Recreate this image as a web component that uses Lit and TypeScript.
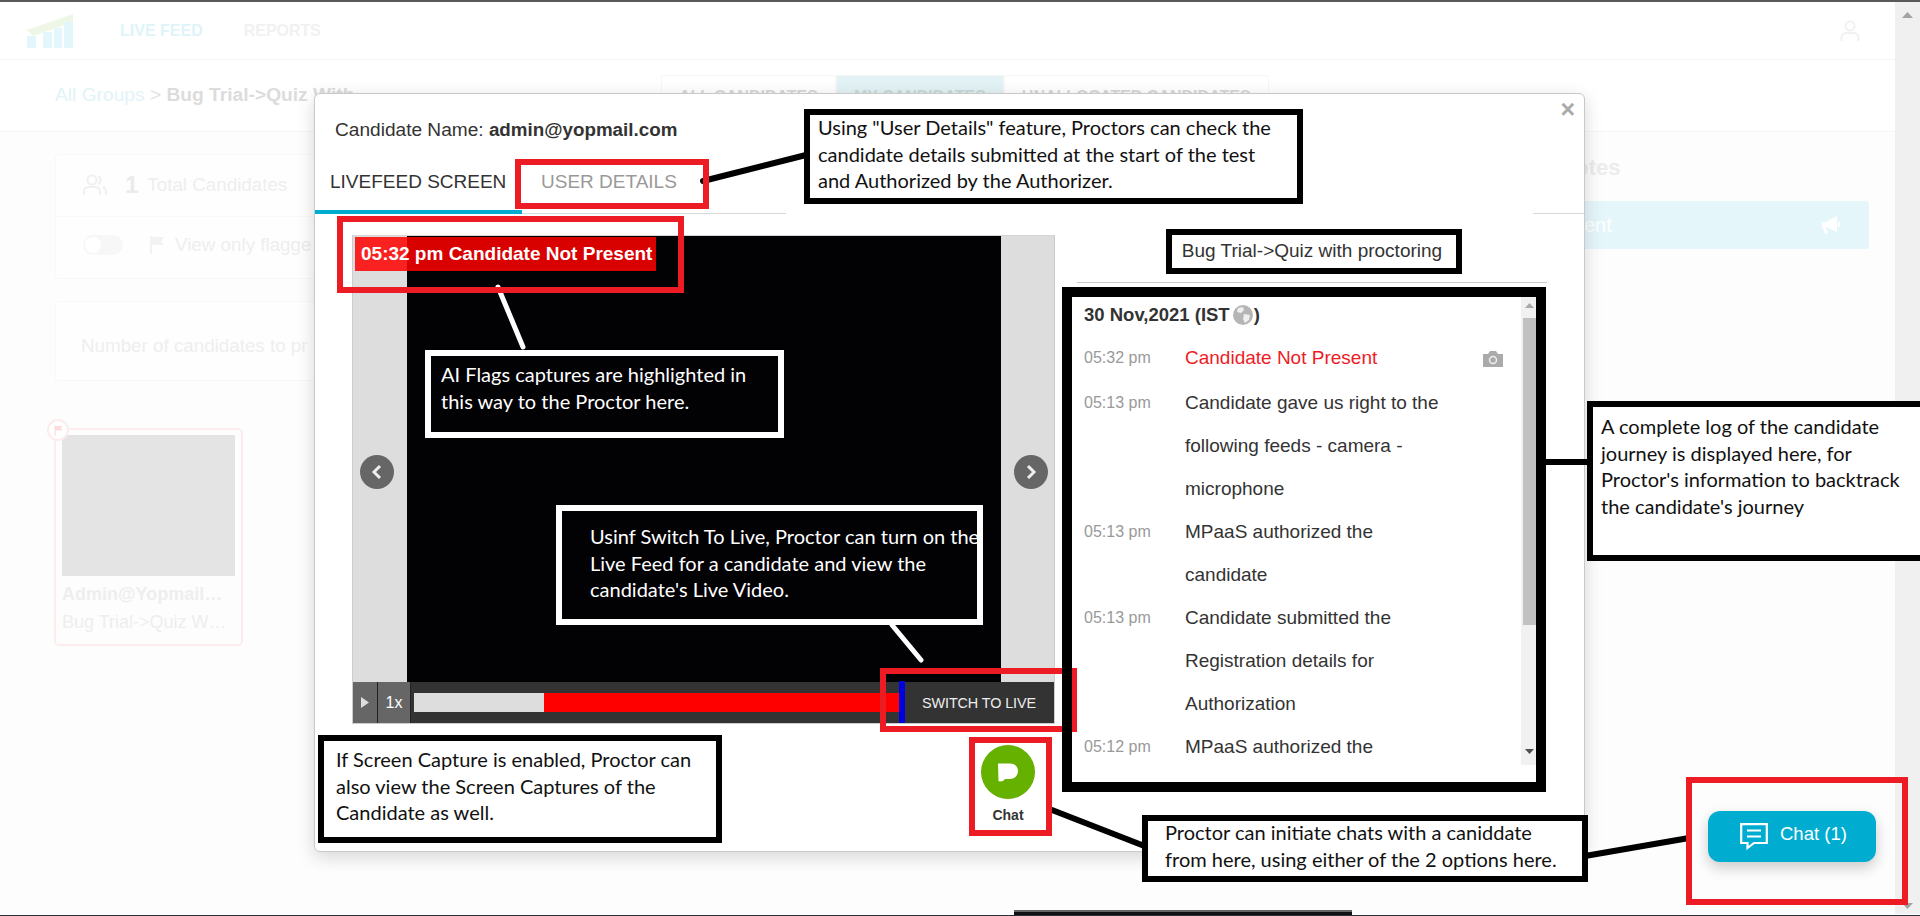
import { LitElement, html, css, svg } from "lit";
import { customElement } from "lit/decorators.js";

const logRows = [
  { t: "05:32 pm", m: "Candidate Not Present", flag: true },
  { t: "05:13 pm", m: "Candidate gave us right to the following feeds - camera - microphone" },
  { t: "05:13 pm", m: "MPaaS authorized the candidate" },
  { t: "05:13 pm", m: "Candidate submitted the Registration details for Authorization" },
  { t: "05:12 pm", m: "MPaaS authorized the" },
];

@customElement("app-root")
export class AppRoot extends LitElement {
  static styles = css`
    :host { display: block; width: 1920px; height: 916px; position: relative; overflow: hidden; background: #fff; font-family: "Liberation Sans", Arial, sans-serif; color: #333; }
    .topline { height: 2px; background: #5a5a5a; }
    .shell { display: flex; height: 912px; }
    .page { flex: 1; min-width: 0; background: #fdfdfd; }
    .vbar { width: 25px; background: #f0f0f0; display: flex; flex-direction: column; align-items: center; justify-content: space-between; padding: 10px 0 5px; box-sizing: border-box; }
    .nav { height: 57px; background: #fff; border-bottom: 1px solid #f5f5f5; display: flex; align-items: center; padding-left: 27px; }
    .nav .logo { width: 46px; height: 34px; margin-right: 47px; }
    .nav a { font-size: 16px; font-weight: 700; margin-right: 41px; color: #f1f1f1; }
    .nav a.on { color: #def4f9; }
    .nav .user { margin-left: auto; margin-right: 35px; width: 20px; height: 22px; }
    .crumbs { height: 71px; border-bottom: 1px solid #f6f6f6; display: flex; align-items: flex-start; background: #fff; }
    .crumbs .path { width: 661px; padding: 24px 0 0 55px; box-sizing: border-box; font-size: 19.2px; color: #e2e2e2; white-space: nowrap; }
    .crumbs .path span { color: #e2f3f8; }
    .crumbs .path b { color: #dcdcdc; }
    .tabsbg { display: flex; padding-top: 15px; }
    .tabsbg div { height: 40px; padding: 12px 17px; box-sizing: border-box; font-size: 16px; font-weight: 700; color: #d8d8d8; border: 1px solid #f6f6f6; white-space: nowrap; }
    .tabsbg .on { background: #e3f2f4; color: #c9d8da; }
    .bgbody { display: flex; padding: 22px 0 0 55px; }
    .left { width: 259px; }
    .card { border: 1px solid #f8f8f8; border-right: 0; border-radius: 4px 0 0 4px; background: #fefefe; margin-bottom: 22px; color: #eeeeee; font-size: 18.8px; }
    .rowbg { display: flex; align-items: center; padding-left: 27px; white-space: nowrap; }
    .r1 { padding-bottom: 2px; height: 59px; border-bottom: 1px solid #f8f8f8; }
    .r2 { height: 61px; padding-bottom: 5px; box-sizing: border-box; }
    .r3 { height: 78px; padding: 10px 0 0 25px; box-sizing: border-box; }
    .rowbg .one { font-size: 24px; font-weight: 700; margin: 0 9px 0 18px; color: #ebebeb; }
    .toggle { width: 40px; height: 20px; flex: none; border-radius: 10px; background: #f7f7f7; margin-right: 26px; display: flex; align-items: center; padding-left: 2px; box-sizing: border-box; }
    .toggle i { width: 16px; height: 16px; border-radius: 50%; background: #fff; }
    .rowbg .fl { margin-right: 10px; flex: none; }
    .rowbg > svg { flex: none; }
    .cand { width: 189px; height: 218px; margin-top: 47px; margin-left: -1px; box-sizing: border-box; border: 2px solid #fdecec; border-radius: 5px; padding: 5px 6px; position: relative; }
    .cand .shot { height: 141px; background: #e4e4e4; }
    .cand .nm { font-size: 18px; font-weight: 700; color: #eeeeee; margin-top: 5px; line-height: 26px; white-space: nowrap; overflow: hidden; }
    .cand .sb { font-size: 18px; color: #eeeeee; line-height: 30px; white-space: nowrap; overflow: hidden; }
    .cand .badge { position: absolute; left: -9px; top: -11px; width: 22px; height: 22px; box-sizing: border-box; border-radius: 50%; background: #fff; border: 2px solid #fdecec; display: flex; align-items: center; justify-content: center; }
    .rightbg { margin-left: 1101px; width: 454px; }
    .rightbg h3 { margin: 0; height: 47px; font-size: 22px; font-weight: 700; color: #ececec; padding-left: 60px; line-height: 28px; white-space: nowrap; }
    .announce { height: 48px; background: #e5f6fa; border-radius: 4px; display: flex; align-items: center; justify-content: space-between; padding: 0 29px 0 11px; color: #fff; font-size: 20px; white-space: nowrap; }

    .modal { position: absolute; left: 314px; top: 93px; width: 1271px; height: 759px; box-sizing: border-box; background: #fff; border: 1px solid #c9c9c9; border-radius: 6px; box-shadow: 0 5px 18px rgba(0,0,0,.16); display: flex; flex-direction: column; }
    .close { position: absolute; right: 9px; top: 3px; font-size: 25px; line-height: 25px; font-weight: 700; color: #aaa; }
    .cname { padding: 24px 0 0 20px; font-size: 19.1px; line-height: 24px; height: 32px; color: #333; white-space: nowrap; }
    .cname b { font-size: 18.8px; }
    .mtabs { height: 64px; box-sizing: border-box; display: flex; border-bottom: 1px solid #d8d8d8; }
    .mtab { font-size: 19px; white-space: nowrap; height: 64px; box-sizing: border-box; padding-top: 21px; line-height: 22px; }
    .mtab.on { width: 207px; padding-left: 15px; border-bottom: 4px solid #00acd0; color: #333; }
    .mtab.off { padding-left: 19px; color: #999; }
    .mbody { display: flex; padding: 21px 0 0 37px; }
    .vcol { width: 703px; display: flex; flex-direction: column; align-items: flex-end; }
    .video { width: 703px; height: 489px; box-sizing: border-box; border: 1px solid #ccc; border-top-color: #d5d5d5; background: #ddd; display: flex; flex-direction: column; position: relative; }
    .stage { height: 446px; display: flex; justify-content: center; }
    .stage .blk { width: 594px; background: #020104; }
    .stamp { position: absolute; left: 2px; top: 1px; height: 34px; width: 301px; box-sizing: border-box; background: rgba(255,0,0,.85); color: #fff; font-size: 19px; font-weight: 700; line-height: 34px; padding-left: 6px; white-space: nowrap; }
    .arrow { position: absolute; top: 219px; width: 34px; height: 34px; border-radius: 50%; background: #666; display: flex; align-items: center; justify-content: center; }
    .arrow.l { left: 7px; }
    .arrow.r { right: 6px; }
    .ctrl { height: 41px; background: #333; display: flex; align-items: center; color: #fff; }
    .ctrl .play { width: 25px; height: 41px; background: #666; border-right: 1px solid #222; display: flex; align-items: center; justify-content: center; box-sizing: border-box; }
    .ctrl .speed { width: 33px; height: 41px; background: #666; border-right: 1px solid #222; box-sizing: border-box; font-size: 16px; line-height: 41px; text-align: center; }
    .track { display: flex; height: 19px; margin-left: 3px; }
    .track .done { width: 130px; background: #ddd; }
    .track .red { width: 355px; background: #f00; }
    .marker { width: 6px; height: 42px; background: #0000e0; margin-top: -2px; }
    .live { margin-left: 17px; font-size: 14.4px; letter-spacing: -0.1px; color: #eee; white-space: nowrap; }
    .chat { margin: 21px 20px 0 0; width: 54px; display: flex; flex-direction: column; align-items: center; }
    .chat svg { display: block; }
    .chat span { font-size: 14px; font-weight: 700; line-height: 16px; margin-top: 8px; color: #333; }
    .rcol { margin-left: 22px; width: 470px; display: flex; flex-direction: column; }
    .rtitle { height: 48px; border-bottom: 1px solid #ccc; text-align: center; font-size: 19px; line-height: 32px; color: #333; white-space: nowrap; box-sizing: border-box; }
    .log { margin-top: 14px; width: 461px; height: 468px; display: flex; overflow: hidden; }
    .logm { flex: 1; padding-left: 7px; }
    .ld { height: 39px; font-size: 18.5px; font-weight: 700; line-height: 36px; display: flex; white-space: nowrap; color: #333; }
    .ld svg { margin: 8px 1px 0 3px; }
    .lr { display: flex; position: relative; }
    .lr.first { height: 45px; }
    .lr .t { width: 101px; font-size: 16px; line-height: 43px; color: #999; flex: none; }
    .lr .m { width: 262px; font-size: 19px; line-height: 43px; color: #333; }
    .lr .m.flag { color: #ee1c25; white-space: nowrap; }
    .lr svg { position: absolute; left: 399px; top: 15px; }
    .sbar { width: 17px; background: #f1f1f1; position: relative; }
    .sbar .thumb { position: absolute; top: 21px; left: 2px; right: 0; height: 307px; background: #c1c1c1; }
    .sbar svg { position: absolute; left: 4px; }
    .sbar .up { top: 6px; }
    .sbar .down { top: 452px; }

    .fab { position: absolute; left: 1708px; top: 811px; width: 168px; height: 51px; border-radius: 12px; background: #00acd0; box-shadow: 0 6px 14px rgba(0,0,0,.2); display: flex; align-items: center; color: #fff; font-size: 18.5px; padding-left: 32px; box-sizing: border-box; gap: 12px; white-space: nowrap; }
    .fab span { margin-top: -5px; }
    .botbar { position: absolute; left: 1014px; top: 910px; width: 338px; height: 6px; background: linear-gradient(#666 0 2px, #111 2px); }
    .botline { position: absolute; left: 0; right: 0; top: 915px; height: 1px; background: #2b2f36; }

    .wires { position: absolute; inset: 0; pointer-events: none; }
    .patch { position: absolute; left: 786px; top: 205px; width: 747px; height: 12px; background: #fff; }
    .frame { position: absolute; box-sizing: border-box; border: 6px solid #ed1c24; }
    .f1 { left: 337px; top: 216px; width: 347px; height: 77px; }
    .f2 { left: 515px; top: 159px; width: 194px; height: 50px; }
    .f3 { left: 880px; top: 668px; width: 197px; height: 64px; }
    .f4 { left: 969px; top: 737px; width: 83px; height: 99px; }
    .f5 { left: 1686px; top: 777px; width: 222px; height: 128px; }
    .k1 { left: 1166px; top: 229px; width: 296px; height: 45px; border-color: #000; }
    .k2 { left: 1062px; top: 287px; width: 484px; height: 505px; border-width: 10px; border-color: #000; }
    .note { position: absolute; box-sizing: border-box; border: 6px solid #000; background: #fff; color: #111; font-family: Lato, "Open Sans", sans-serif; font-size: 20px; line-height: 26.5px; white-space: nowrap; overflow: hidden; }
    .note.dark { background: #020104; border-color: #fff; color: #fff; }
    .note .up1 { margin-top: -1px; }
    .note .up2 { margin-top: -2px; }
    .n1 { left: 804px; top: 109px; width: 499px; height: 95px; padding: 0 0 0 8px; }
    .n2 { left: 425px; top: 350px; width: 359px; height: 88px; padding: 5px 0 0 10px; }
    .n3 { left: 556px; top: 505px; width: 427px; height: 120px; padding: 12px 0 0 28px; }
    .n4 { left: 318px; top: 735px; width: 404px; height: 108px; padding: 5px 0 0 12px; }
    .n5 { left: 1142px; top: 815px; width: 446px; height: 67px; padding: 0 0 0 17px; }
    .n6 { left: 1587px; top: 401px; width: 345px; height: 160px; padding: 6px 0 0 8px; }
  `;

  private flagIcon(c: string, s = 16) {
    return html`<svg class="fl" width=${s} height=${s + 2} viewBox="0 0 16 18"><path fill=${c} d="M1 0h2v18H1zM3 1h12l-3 4 3 4H3z"/></svg>`;
  }

  render() {
    return html`
      <div class="topline"></div>
      <div class="shell">
        <div class="page">
          <div class="nav">
            <svg class="logo" viewBox="0 0 46 34">
              <path fill="#eef7e6" d="M0 16 L46 0 V8 L6 22 Z"/>
              <path fill="#e3f6fb" d="M0 22h9v12H0zM16 18h9v16h-9zM37 8h9v26h-9zM27 14h8v20h-8z"/>
            </svg>
            <a class="on">LIVE FEED</a><a>REPORTS</a>
            <svg class="user" viewBox="0 0 20 22" fill="none" stroke="#f1f1f1" stroke-width="2"><circle cx="10" cy="6" r="4.5"/><path d="M1.500 21v-3c0-3 2-5 5-5h7c3 0 5 2 5 5v3"/></svg>
          </div>
          <div class="crumbs">
            <div class="path"><span>All Groups</span> &gt; <b>Bug Trial-&gt;Quiz With</b></div>
            <div class="tabsbg"><div>ALL CANDIDATES</div><div class="on">MY CANDIDATES</div><div>UNALLOCATED CANDIDATES</div></div>
          </div>
          <div class="bgbody">
            <div class="left">
              <div class="card">
                <div class="rowbg r1">
                  <svg width="24" height="22" viewBox="0 0 24 22" fill="none" stroke="#f0f0f0" stroke-width="2"><circle cx="9" cy="6" r="4.5"/><path d="M1 21v-3c0-3 2-5 5-5h6c3 0 5 2 5 5v3M15 2a4.500 4.500 0 0 1 0 8M20 13c2 1 3 3 3 5v3"/></svg>
                  <span class="one">1</span>Total Candidates
                </div>
                <div class="rowbg r2"><div class="toggle"><i></i></div>${this.flagIcon("#f2f2f2")}View only flagge</div>
              </div>
              <div class="card"><div class="rowbg r3">Number of candidates to pr</div></div>
              <div class="cand">
                <div class="badge">${this.flagIcon("#fbdcdc", 9)}</div>
                <div class="shot"></div>
                <div class="nm">Admin@Yopmail…</div>
                <div class="sb">Bug Trial-&gt;Quiz W…</div>
              </div>
            </div>
            <div class="rightbg">
              <h3>Proctor Notes</h3>
              <div class="announce"><span>Send Announcement</span>
                <svg width="18" height="20" viewBox="0 0 18 20"><path fill="#fff" d="M0 7h4L15 1v16L4 12v1l2 6H3l-2-6H0zM16 6l2 1v4l-2 1z"/></svg>
              </div>
            </div>
          </div>
        </div>
        <div class="vbar">
          <svg width="11" height="6"><path fill="#a3a3a3" d="M5.500 0L11 6H0z"/></svg>
          <svg width="11" height="6"><path fill="#a3a3a3" d="M0 0h11L5.500 6z"/></svg>
        </div>
      </div>

      <div class="modal">
        <div class="close">×</div>
        <div class="cname">Candidate Name: <b>admin@yopmail.com</b></div>
        <div class="mtabs">
          <div class="mtab on">LIVEFEED SCREEN</div>
          <div class="mtab off">USER DETAILS</div>
        </div>
        <div class="mbody">
          <div class="vcol">
            <div class="video">
              <div class="stage"><div class="blk"></div></div>
              <div class="stamp">05:32 pm Candidate Not Present</div>
              <div class="arrow l"><svg width="12" height="16" viewBox="0 0 12 16" fill="none" stroke="#eee" stroke-width="3"><path d="M9 2L3 8l6 6"/></svg></div>
              <div class="arrow r"><svg width="12" height="16" viewBox="0 0 12 16" fill="none" stroke="#eee" stroke-width="3"><path d="M3 2l6 6-6 6"/></svg></div>
              <div class="ctrl">
                <div class="play"><svg width="9" height="11"><path fill="#ddd" d="M0 0l8 5.500L0 11z"/></svg></div>
                <div class="speed">1x</div>
                <div class="track"><div class="done"></div><div class="red"></div></div>
                <div class="marker"></div>
                <div class="live">SWITCH TO LIVE</div>
              </div>
            </div>
            <div class="chat">
              <svg width="54" height="54" viewBox="0 0 54 54"><circle cx="27" cy="27" r="27" fill="#66b000"/><path fill="#fff" d="M17 18.500H29C34 18.500 37 22 37 26C37 31 33 34 29 34H24L22 36L19 36.500L17.500 36Z"/></svg>
              <span>Chat</span>
            </div>
          </div>
          <div class="rcol">
            <div class="rtitle">Bug Trial-&gt;Quiz with proctoring</div>
            <div class="log">
              <div class="logm">
                <div class="ld">30 Nov,2021 (IST
                  <svg width="20" height="20" viewBox="0 0 20 20"><circle cx="10" cy="10" r="10" fill="#b5b5b5"/><path fill="#efefef" d="M5 3l5-1 1 3-3 3-4-1zM11 9l6 1-1 5-4 3-2-4z"/></svg>)</div>
                ${logRows.map((r) => html`
                  <div class="lr ${r.flag ? "first" : ""}">
                    <div class="t">${r.t}</div>
                    <div class="m ${r.flag ? "flag" : ""}">${r.m}</div>
                    ${r.flag ? html`<svg width="20" height="16" viewBox="0 0 20 16"><path fill="#aaa" d="M0 3h5l2-3h6l2 3h5v13H0z"/><circle cx="10" cy="9" r="3.500" fill="none" stroke="#eee" stroke-width="1.500"/></svg>` : ""}
                  </div>`)}
              </div>
              <div class="sbar">
                <svg class="up" width="9" height="5"><path fill="#a8a8a8" d="M4.500 0L9 5H0z"/></svg>
                <div class="thumb"></div>
                <svg class="down" width="9" height="5"><path fill="#505050" d="M0 0h9L4.500 5z"/></svg>
              </div>
            </div>
          </div>
        </div>
      </div>

      <div class="fab">
        <svg width="28" height="27" viewBox="0 0 28 27" fill="none" stroke="#fff" stroke-width="2.200"><path d="M1.200 1.200H26.800V20H14L7.500 25V20H1.200Z"/><path d="M7 7.500H21M7 13.500H21"/></svg>
        <span>Chat (1)</span>
      </div>
      <div class="botbar"></div>
      <div class="botline"></div>

      <div class="patch"></div>
      <svg class="wires" width="1920" height="916">
        ${svg`<g stroke-linecap="round">
          <path stroke="#000" stroke-width="6" d="M703 181L806 155M1546 462H1590M1052 810L1147 847M1585 856L1689 838"/>
          <path stroke="#fff" stroke-width="5" d="M498 287L523 347M892 625L921 660"/>
        </g>`}
      </svg>
      <div class="frame f1"></div>
      <div class="frame f2"></div>
      <div class="frame f3"></div>
      <div class="frame f4"></div>
      <div class="frame f5"></div>
      <div class="frame k1"></div>
      <div class="frame k2"></div>
      <div class="note n1"><div class="up1">Using "User Details" feature, Proctors can check the<br>candidate details submitted at the start of the test<br>and Authorized by the Authorizer.</div></div>
      <div class="note dark n2">AI Flags captures are highlighted in<br>this way to the Proctor here.</div>
      <div class="note dark n3">Usinf Switch To Live, Proctor can turn on the<br>Live Feed for a candidate and view the<br>candidate's Live Video.</div>
      <div class="note n4">If Screen Capture is enabled, Proctor can<br>also view the Screen Captures of the<br>Candidate as well.</div>
      <div class="note n5"><div class="up2">Proctor can initiate chats with a caniddate<br>from here, using either of the 2 options here.</div></div>
      <div class="note n6">A complete log of the candidate<br>journey is displayed here, for<br>Proctor's information to backtrack<br>the candidate's journey</div>
    `;
  }
}
